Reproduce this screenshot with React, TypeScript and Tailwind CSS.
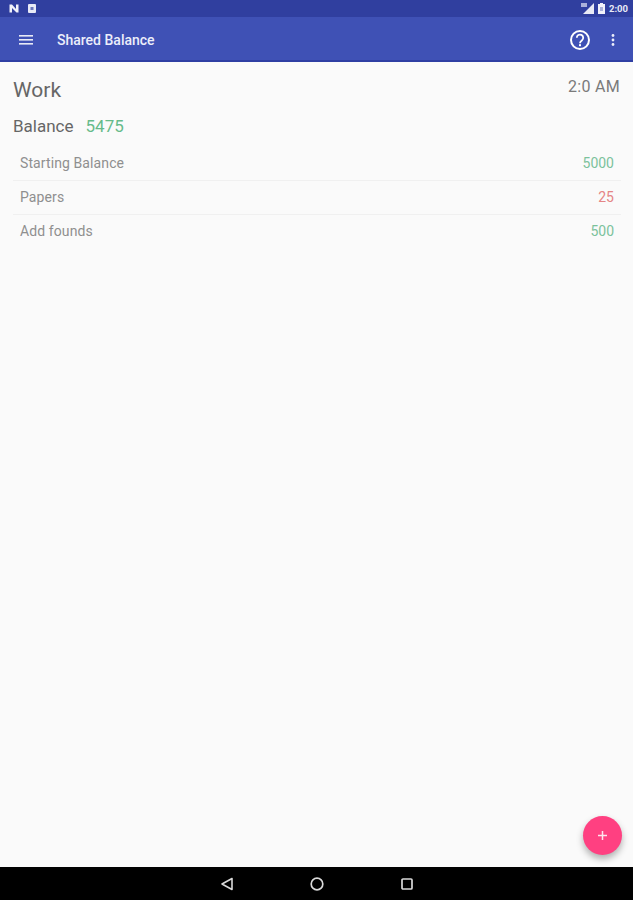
import React from 'react';

interface Entry {
  name: string;
  amount: number;
  spent?: boolean;
}

const entries: Entry[] = [
  { name: 'Starting Balance', amount: 5000 },
  { name: 'Papers', amount: 25, spent: true },
  { name: 'Add founds', amount: 500 },
];

const App: React.FC = () => {
  return (
    <div className="h-[900px] w-[633px] flex flex-col relative bg-[#fafafa] font-['Roboto',sans-serif] overflow-hidden">
      {/* Status bar */}
      <div className="h-[17px] shrink-0 bg-[#303f9f] flex items-center justify-between pl-[9px] pr-[5px]">
        <div className="flex items-center gap-[9px]">
          <svg width="10" height="9" viewBox="0 0 10 9">
            <path d="M0.5 0.5h2.500l4 4.500v-4.500h2.500v8h-2l-4.500-4.500v4.500h-2.500z" fill="#f1f2fa" />
          </svg>
          <svg width="8" height="9" viewBox="0 0 8 9">
            <rect x="0" y="0" width="8" height="9" rx="1" fill="#e8eaf6" />
            <rect x="2.500" y="3" width="3" height="3" fill="#6a76bd" />
          </svg>
        </div>
        <div className="flex items-center">
          <svg width="13" height="11" viewBox="0 0 13 11" className="mr-[4px]">
            <path d="M13 0v11H2z" fill="#e8eaf6" />
            <rect x="0" y="0" width="6" height="4" fill="#aab1da" />
          </svg>
          <svg width="7" height="11" viewBox="0 0 7 11" className="mr-[4px]">
            <path d="M2 0h3v1h2v10H0V1h2z" fill="#f1f2fa" />
            <rect x="2" y="4" width="3" height="4" fill="#aab1da" />
          </svg>
          <span className="text-[9.500px] leading-none font-bold text-[#e8eaf6]">2:00</span>
        </div>
      </div>

      {/* Toolbar */}
      <div className="h-[45px] shrink-0 bg-[#3f51b5] border-b-2 border-[#2f3fa3] flex items-center pt-[2px] pl-[19px] pr-[18px] text-white">
        <svg width="14" height="12" viewBox="0 0 14 12" className="mr-[24px]">
          <rect x="0" y="1" width="14" height="1.600" fill="#e8eaf6" />
          <rect x="0" y="5" width="14" height="1.600" fill="#e8eaf6" />
          <rect x="0" y="9" width="14" height="1.600" fill="#e8eaf6" />
        </svg>
        <span className="text-[14px] font-medium text-[#eceefa] flex-1 mt-[1px]">Shared Balance</span>
        <svg width="22" height="22" viewBox="0 0 22 22" className="mr-[20px]">
          <circle cx="11" cy="11" r="9" fill="none" stroke="white" strokeWidth="2" />
          <path d="M7.800 8.800a3.200 3.200 0 1 1 5.200 2.500c-1.200.9-2 1.400-2 2.900" fill="none" stroke="white" strokeWidth="1.800" />
          <rect x="10" y="15.200" width="2" height="2" fill="white" />
        </svg>
        <svg width="4" height="12" viewBox="0 0 4 12">
          <circle cx="2" cy="1.500" r="1.400" fill="#eceefa" />
          <circle cx="2" cy="6" r="1.400" fill="#eceefa" />
          <circle cx="2" cy="10.500" r="1.400" fill="#eceefa" />
        </svg>
      </div>

      {/* Content */}
      <div className="flex-1 px-[13px] pt-[14px]">
        <div className="flex justify-between items-start">
          <span className="text-[21px] leading-[28px] text-[#666666]">Work</span>
          <span className="text-[16px] leading-[22px] text-[#7a7a7a] tracking-[0.3px]">2:0 AM</span>
        </div>
        <div className="flex items-center mt-[11px] h-[24px]">
          <span className="text-[17px] text-[#666666] mr-[12px]">Balance</span>
          <span className="text-[17px] text-[#66bb8a]">5475</span>
        </div>
        <div className="mt-[8px] w-[608px]">
          {entries.map((entry, idx) => (
            <div
              key={entry.name}
              className={`h-[34px] flex items-center justify-between px-[7px] border-b ${
                idx < entries.length - 1 ? 'border-[#f0f0f0]' : 'border-transparent'
              }`}
            >
              <span className="text-[14px] tracking-[0.1px] text-[#8f8f8f]">{entry.name}</span>
              <span className={`text-[14px] ${entry.spent ? 'text-[#e58585]' : 'text-[#7cc29c]'}`}>
                {entry.amount}
              </span>
            </div>
          ))}
        </div>
      </div>

      {/* Nav bar */}
      <div className="h-[33px] shrink-0 bg-black flex items-center justify-center gap-[76px]">
        <svg width="14" height="14" viewBox="0 0 14 14">
          <path d="M12 1.500v11L2 7z" fill="none" stroke="#d9d9d9" strokeWidth="1.600" strokeLinejoin="round" />
        </svg>
        <svg width="14" height="14" viewBox="0 0 14 14">
          <circle cx="7" cy="7" r="5.800" fill="none" stroke="#d9d9d9" strokeWidth="1.700" />
        </svg>
        <svg width="14" height="14" viewBox="0 0 14 14">
          <rect x="2" y="2" width="10" height="10" rx="1" fill="none" stroke="#d9d9d9" strokeWidth="1.700" />
        </svg>
      </div>

      {/* FAB */}
      <button className="absolute left-[583px] top-[816px] w-[39px] h-[39px] rounded-full bg-[#ff4081] flex items-center justify-center shadow-[0_4px_7px_rgba(0,0,0,0.3)]">
        <svg width="9" height="9" viewBox="0 0 9 9">
          <path d="M4.500 0v9M0 4.500h9" stroke="#fde4ee" strokeWidth="1.500" />
        </svg>
      </button>
    </div>
  );
};

export default App;
